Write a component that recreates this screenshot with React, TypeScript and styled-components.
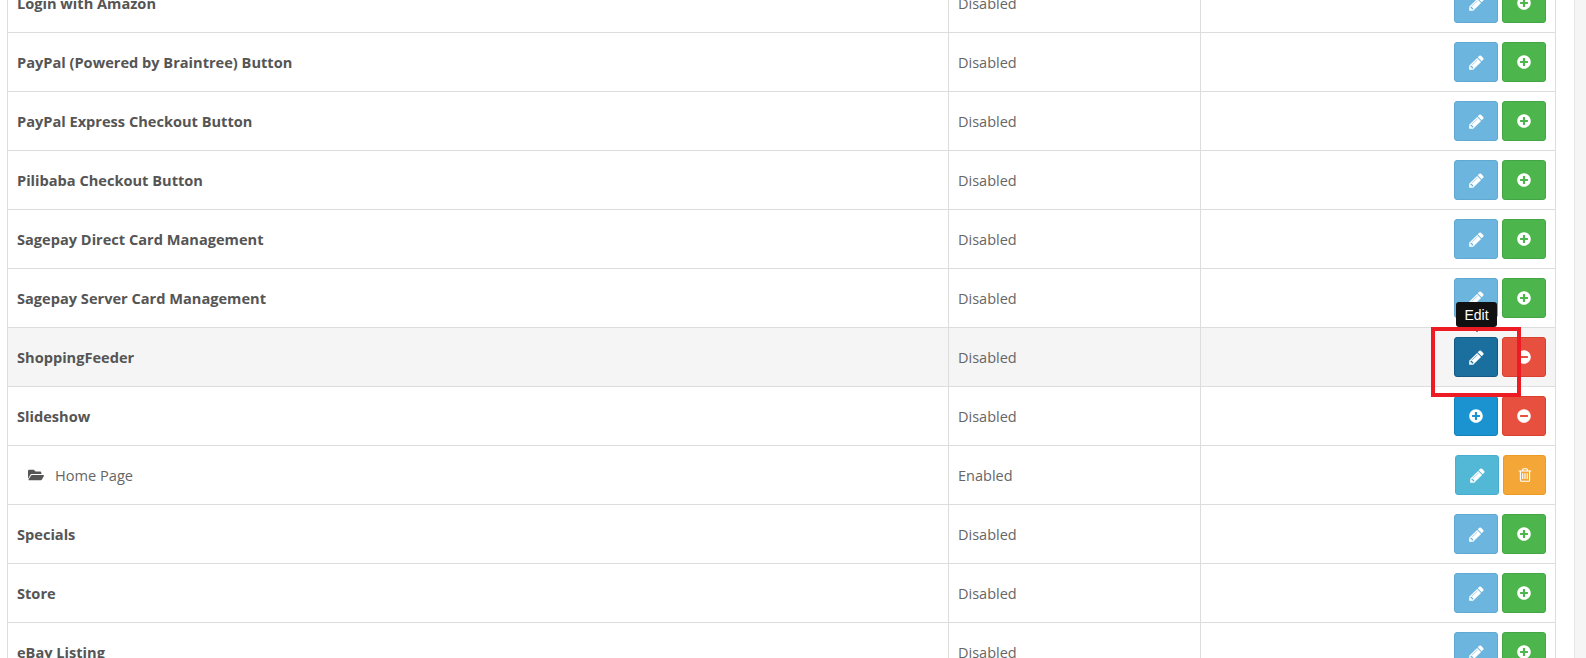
import { FC, ReactElement } from 'react';
import styled, { createGlobalStyle } from 'styled-components';
import { FaFolderOpen, FaMinusCircle, FaPlusCircle } from 'react-icons/fa';

const GlobalStyle = createGlobalStyle`
  html, body {
    margin: 0;
    padding: 0;
    background: #fff;
    overflow: hidden;
  }
  body {
    font-family: 'Open Sans', sans-serif;
    font-size: 14.5px;
    color: #666;
  }
`;

const Page = styled.div`
  display: flex;
  width: 1586px;
  height: 658px;
  overflow: hidden;
`;

const Content = styled.main`
  flex: 1;
  padding: 0 18px 0 7px;
  overflow: hidden;
`;

const Scrollbar = styled.div`
  width: 11px;
  background: #f5f5f5;
  border-left: 1px solid #e6e6e6;
`;

const Table = styled.div`
  margin-top: -26px;
  border-left: 1px solid #ddd;
  border-right: 1px solid #ddd;
`;

const Row = styled.div<{ $hover?: boolean }>`
  display: grid;
  grid-template-columns: 941px 252px 1fr;
  height: 59px;
  border-bottom: 1px solid #ddd;
  box-sizing: border-box;
  background: ${(p) => (p.$hover ? '#f5f5f5' : '#fff')};
`;

const Cell = styled.div`
  display: flex;
  align-items: center;
  padding-left: 9px;
  border-right: 1px solid #ddd;
`;

const NameCell = styled(Cell)<{ $child?: boolean }>`
  font-weight: ${(p) => (p.$child ? 400 : 700)};
  font-size: ${(p) => (p.$child ? '14.6px' : '14.6px')};
  color: ${(p) => (p.$child ? '#666' : '#555')};
  padding-left: ${(p) => (p.$child ? '20px' : '9px')};
  svg {
    margin-right: 11px;
    font-size: 16px;
    color: #555;
  }
`;

const ActionCell = styled.div`
  position: relative;
  display: flex;
  align-items: center;
  justify-content: flex-end;
  gap: 4px;
  padding-right: 9px;
`;

const ActionButton = styled.button<{ $color: string; $edge: string; $narrow?: boolean }>`
  display: flex;
  align-items: center;
  justify-content: center;
  width: ${(p) => (p.$narrow ? '43px' : '44px')};
  height: 40px;
  padding: 0;
  border: 1px solid ${(p) => p.$edge};
  border-radius: 3px;
  background: ${(p) => p.$color};
  color: #fff;
  font-size: 14px;
`;

const Tooltip = styled.div`
  position: absolute;
  top: -26px;
  right: 58px;
  width: 41px;
  height: 25px;
  display: flex;
  align-items: center;
  justify-content: center;
  box-sizing: border-box;
  border-radius: 3px;
  background: #111;
  color: #fff;
  font-family: 'Liberation Sans', Arial, sans-serif;
  font-size: 14px;
  z-index: 2;
  &::after {
    content: '';
    position: absolute;
    top: 100%;
    left: 50%;
    margin-left: -5px;
    border-style: solid;
    border-width: 5px 5px 0;
    border-color: #111 transparent transparent;
  }
`;

const Highlight = styled.div`
  position: absolute;
  top: -1px;
  right: 34px;
  width: 90px;
  height: 70px;
  box-sizing: border-box;
  border: 4px solid #ed1c24;
  z-index: 3;
  pointer-events: none;
`;

const palette = {
  edit: ['#6cb5de', '#5fa9d3'],
  editDark: ['#1a6f9f', '#125a85'],
  editTeal: ['#53b8d6', '#46afcd'],
  add: ['#4cb64c', '#43a543'],
  install: ['#1c93d1', '#1681b9'],
  remove: ['#e7503e', '#d8412f'],
  trash: ['#f4a737', '#eb9a22'],
};

// font awesome 4 glyphs, react-icons only ships the newer shapes
const PencilIcon: FC = (): ReactElement => (
  <svg width="17" height="17" viewBox="0 0 1792 1792" fill="currentColor">
    <path d="M491 1536l91-91-235-235-91 91v107h128v128h107zm523-928q0-22-22-22-10 0-17 7l-542 542q-7 7-7 17 0 22 22 22 10 0 17-7l542-542q7-7 7-17zm-54-192l416 416-832 832h-416v-416zm683 96q0 53-37 90l-166 166-416-416 166-165q36-38 90-38 53 0 91 38l235 234q37 39 37 91z" />
  </svg>
);

const TrashIcon: FC = (): ReactElement => (
  <svg width="16" height="16" viewBox="0 0 1792 1792" fill="currentColor">
    <path d="M704 736v576q0 14-9 23t-23 9h-64q-14 0-23-9t-9-23v-576q0-14 9-23t23-9h64q14 0 23 9t9 23zm256 0v576q0 14-9 23t-23 9h-64q-14 0-23-9t-9-23v-576q0-14 9-23t23-9h64q14 0 23 9t9 23zm256 0v576q0 14-9 23t-23 9h-64q-14 0-23-9t-9-23v-576q0-14 9-23t23-9h64q14 0 23 9t9 23zm128 724v-948h-896v948q0 22 7 40.500t14.500 27 10.500 8.500h832q3 0 10.500-8.500t14.500-27 7-40.500zm-672-1076h448l-48-117q-7-9-17-11h-317q-10 2-17 11zm928 32v64q0 14-9 23t-23 9h-96v948q0 83-47 143.500t-113 60.500h-832q-66 0-113-58.500t-47-141.500v-952h-96q-14 0-23-9t-9-23v-64q0-14 9-23t23-9h309l70-167q15-37 54-63t79-26h320q40 0 79 26t54 63l70 167h309q14 0 23 9t9 23z" />
  </svg>
);

type ActionKind = 'disabled' | 'installed' | 'hover' | 'child';

interface ModuleRow {
  name: string;
  status: string;
  kind: ActionKind;
}

const rows: ModuleRow[] = [
  { name: 'Login with Amazon', status: 'Disabled', kind: 'disabled' },
  { name: 'PayPal (Powered by Braintree) Button', status: 'Disabled', kind: 'disabled' },
  { name: 'PayPal Express Checkout Button', status: 'Disabled', kind: 'disabled' },
  { name: 'Pilibaba Checkout Button', status: 'Disabled', kind: 'disabled' },
  { name: 'Sagepay Direct Card Management', status: 'Disabled', kind: 'disabled' },
  { name: 'Sagepay Server Card Management', status: 'Disabled', kind: 'disabled' },
  { name: 'ShoppingFeeder', status: 'Disabled', kind: 'hover' },
  { name: 'Slideshow', status: 'Disabled', kind: 'installed' },
  { name: 'Home Page', status: 'Enabled', kind: 'child' },
  { name: 'Specials', status: 'Disabled', kind: 'disabled' },
  { name: 'Store', status: 'Disabled', kind: 'disabled' },
  { name: 'eBay Listing', status: 'Disabled', kind: 'disabled' },
];

const Actions: FC<{ kind: ActionKind }> = ({ kind }): ReactElement => {
  if (kind === 'hover') {
    return (
      <ActionCell>
        <Tooltip>Edit</Tooltip>
        <ActionButton $color={palette.editDark[0]} $edge={palette.editDark[1]}>
          <PencilIcon />
        </ActionButton>
        <ActionButton $color={palette.remove[0]} $edge={palette.remove[1]}>
          <FaMinusCircle />
        </ActionButton>
        <Highlight />
      </ActionCell>
    );
  }
  if (kind === 'installed') {
    return (
      <ActionCell>
        <ActionButton $color={palette.install[0]} $edge={palette.install[1]}>
          <FaPlusCircle />
        </ActionButton>
        <ActionButton $color={palette.remove[0]} $edge={palette.remove[1]}>
          <FaMinusCircle />
        </ActionButton>
      </ActionCell>
    );
  }
  if (kind === 'child') {
    return (
      <ActionCell>
        <ActionButton $color={palette.editTeal[0]} $edge={palette.editTeal[1]}>
          <PencilIcon />
        </ActionButton>
        <ActionButton $narrow $color={palette.trash[0]} $edge={palette.trash[1]}>
          <TrashIcon />
        </ActionButton>
      </ActionCell>
    );
  }
  return (
    <ActionCell>
      <ActionButton $color={palette.edit[0]} $edge={palette.edit[1]}>
        <PencilIcon />
      </ActionButton>
      <ActionButton $color={palette.add[0]} $edge={palette.add[1]}>
        <FaPlusCircle />
      </ActionButton>
    </ActionCell>
  );
};

const App: FC = (): ReactElement => (
  <Page>
    <GlobalStyle />
    <Content>
      <Table>
        {rows.map((row) => (
          <Row key={row.name} $hover={row.kind === 'hover'}>
            <NameCell $child={row.kind === 'child'}>
              {row.kind === 'child' && <FaFolderOpen />}
              {row.name}
            </NameCell>
            <Cell>{row.status}</Cell>
            <Actions kind={row.kind} />
          </Row>
        ))}
      </Table>
    </Content>
    <Scrollbar />
  </Page>
);

export default App;
